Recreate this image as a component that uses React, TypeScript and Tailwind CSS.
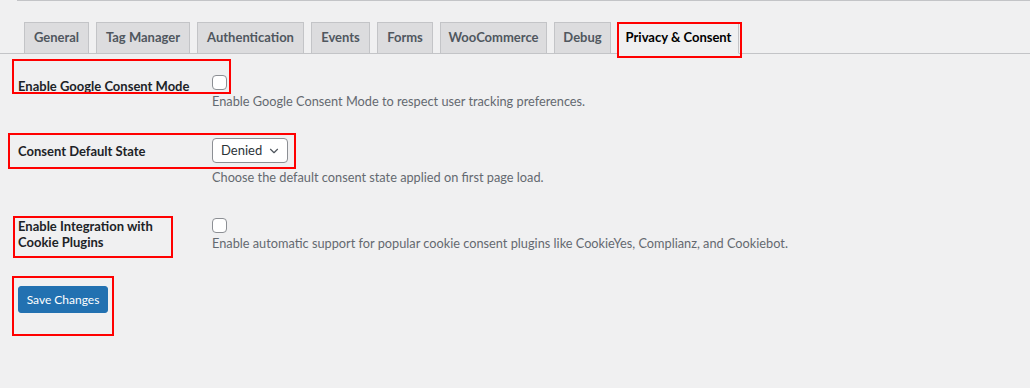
import { ChevronDown } from "lucide-react";

const tabs = [
  { label: "General", w: "w-[65px]" },
  { label: "Tag Manager", w: "w-[94px]" },
  { label: "Authentication", w: "w-[107px]" },
  { label: "Events", w: "w-[59px]" },
  { label: "Forms", w: "w-[56px]" },
  { label: "WooCommerce", w: "w-[107px]" },
  { label: "Debug", w: "w-[57px]" },
  { label: "Privacy & Consent", w: "w-[121px]" },
];

function Checkbox() {
  return <div className="w-[15px] h-[15px] rounded-[4px] border border-[#8c8f94] bg-white" />;
}

export default function App() {
  return (
    <div
      className="relative w-[1030px] h-[388px] overflow-hidden bg-[#f0f0f1] text-[13px]"
      style={{ fontFamily: "Lato, 'Liberation Sans', sans-serif" }}
    >
      <div className="ml-[17px] h-px bg-[#c3c4c7]" />

      {/* tabs */}
      <div className="mt-[21px] flex items-end gap-[7px] border-b border-[#c3c4c7] pl-[24px]">
        {tabs.map((t, i) => {
          const active = i === tabs.length - 1;
          return (
            <div
              key={t.label}
              className={
                active
                  ? `${t.w} -mb-px h-[32px] flex items-center justify-center border border-[#c3c4c7] border-b-[#f0f0f1] bg-[#f0f0f1] text-black font-bold text-[13px]`
                  : `${t.w} -mb-px h-[32px] flex items-center justify-center border border-[#c3c4c7] bg-[#dcdcde] text-[#50575e] font-bold text-[13px]`
              }
            >
              {t.label}
            </div>
          );
        })}
      </div>

      {/* form rows */}
      <div className="grid grid-cols-[194px_1fr] pl-[18px] text-[#1d2327]">
        <div className="pt-[24px] font-bold leading-[16px]">Enable Google Consent Mode</div>
        <div className="pt-[21px]">
          <Checkbox />
          <p className="mt-[2px] leading-[18px] text-[12.75px] text-[#646970]">
            Enable Google Consent Mode to respect user tracking preferences.
          </p>
        </div>

        <div className="pt-[33px] font-bold leading-[16px]">Consent Default State</div>
        <div className="pt-[28px]">
          <div className="flex items-center justify-between w-[76px] h-[25px] rounded-[4px] border border-[#8c8f94] bg-white pl-[8px] pr-[6px] text-[#2c3338]">
            <span>Denied</span>
            <ChevronDown size={14} strokeWidth={2} className="text-[#50575e]" />
          </div>
          <p className="mt-[5px] leading-[18px] text-[12.75px] text-[#646970]">
            Choose the default consent state applied on first page load.
          </p>
        </div>

        <div className="pt-[32px] font-bold leading-[16px]">
          Enable Integration with
          <br />
          Cookie Plugins
        </div>
        <div className="pt-[32px]">
          <Checkbox />
          <p className="mt-[1px] leading-[18px] text-[12.75px] text-[#646970]">
            Enable automatic support for popular cookie consent plugins like CookieYes, Complianz, and Cookiebot.
          </p>
        </div>
      </div>

      <div className="pl-[18px] mt-[34px]">
        <button className="w-[90px] h-[27px] rounded-[3px] bg-[#2271b1] text-white text-[12px] border border-[#2271b1]">
          Save Changes
        </button>
      </div>

      {/* annotation boxes */}
      <div className="absolute left-[617px] top-[22px] w-[125px] h-[36px] border-2 border-[#ff0000]" />
      <div className="absolute left-[12px] top-[59px] w-[219px] h-[35px] border-2 border-[#ff0000]" />
      <div className="absolute left-[8px] top-[133px] w-[288px] h-[36px] border-2 border-[#ff0000]" />
      <div className="absolute left-[13px] top-[216px] w-[160px] h-[42px] border-2 border-[#ff0000]" />
      <div className="absolute left-[12px] top-[276px] w-[102px] h-[60px] border-2 border-[#ff0000]" />
    </div>
  );
}
